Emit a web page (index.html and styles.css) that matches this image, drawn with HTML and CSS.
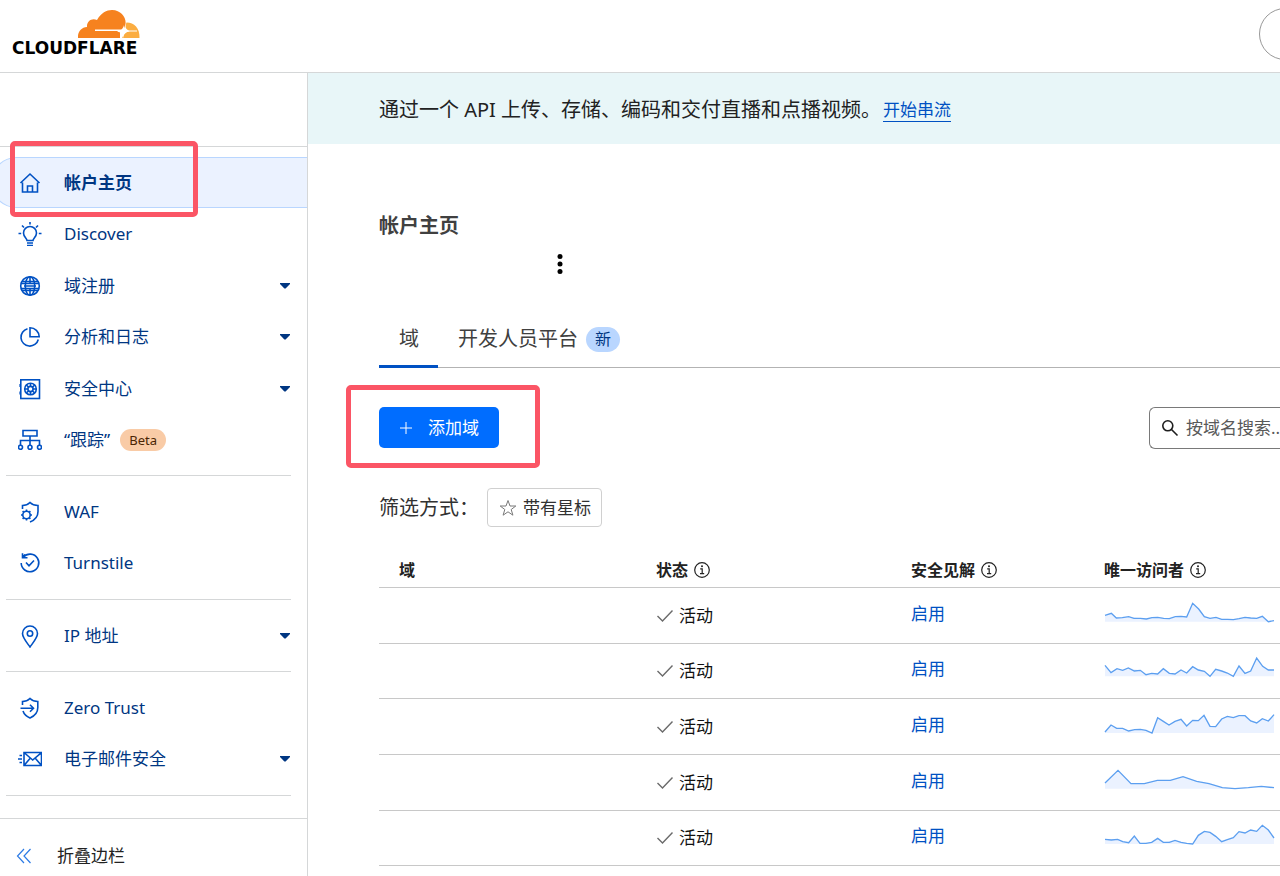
FILE: index.html
```html
<!DOCTYPE html>
<html lang="zh-CN">
<head>
<meta charset="utf-8">
<title>帐户主页 | Cloudflare</title>
<meta name="viewport" content="width=device-width, initial-scale=1">
<link rel="stylesheet" href="styles.css">
</head>
<body>
<svg class="defs" aria-hidden="true">
  <symbol id="caret" viewBox="0 0 10 6"><path d="M0 0h10v1L5.600 5.600h-1.200L0 1z" fill="currentColor"/></symbol>
  <symbol id="check" viewBox="0 0 18 14"><path d="M1.500 7l5 5L16.500 1.500" fill="none" stroke="currentColor" stroke-width="1.400"/></symbol>
  <symbol id="info" viewBox="0 0 16 16"><circle cx="8" cy="8" r="7.300" fill="none" stroke="currentColor" stroke-width="1.200"/><circle cx="8" cy="4.300" r="1" fill="currentColor"/><path d="M6.200 6.800h2v4.700M6 11.600h4.200" fill="none" stroke="currentColor" stroke-width="1.200"/></symbol>
</svg>
<div class="app">
  <header class="topbar">
    <a class="brand" href="#">
      <svg class="brand-cloud" viewBox="0 0 62 28" aria-hidden="true">
        <path d="M0 28C-.5 22 3 17.500 9 17C8.500 11 14 7.500 19 10C23 3 29 0 34 .1C43 0 48.500 8 47.500 14L46 19.500H17V21H42V28Z" fill="#f6821f"/>
        <path d="M48.500 12.600C56 12.500 62 18 61.500 28H44C46 23.500 48 22 51.500 21.500H59V20.500H51C47.500 19.500 46.800 17 48.500 12.600Z" fill="#fbad41"/>
        <path d="M46 15C46.500 19 47.500 20.500 52 21C47.500 22 46 23.500 45 28.500C44.500 24 43.500 22.500 39 21.500C43 20.500 45 19 46 15Z" fill="#fff"/>
      </svg>
      <span class="brand-name">CLOUDFLARE</span>
    </a>
    <button class="round-button" type="button" aria-label="菜单"></button>
  </header>

  <div class="shell">
    <aside class="sidebar">
      <div class="account-slot"></div>
      <nav>
        <ul class="nav-group first">
          <li><a class="nav-item active" href="#"><svg class="ico" viewBox="0 0 24 24"><path d="M2.500 12L12 3l9.500 9M4.500 11.500v9.500h15v-9.500M9.500 21v-6h5v6"/></svg><span>帐户主页</span><i class="mark mark-nav"></i></a></li>
          <li><a class="nav-item" href="#"><svg class="ico" viewBox="0 0 24 24"><path d="M9 18.500c0-2-3.500-3.500-3.500-7.500a6.500 6.500 0 0 1 13 0c0 4-3.500 5.500-3.500 7.500zM9 21h6M9 23.500h6M12 0v2.500M.5 11.500h2.700M20.800 11.500h2.700M4 3.500l2 2M20 3.500l-2 2"/></svg><span>Discover</span></a></li>
          <li><a class="nav-item" href="#"><svg class="ico" viewBox="0 0 24 24"><circle cx="12" cy="12" r="9.300"/><ellipse cx="12" cy="12" rx="4.700" ry="9.300"/><path d="M12 2.700v6M12 15v6.300M4 7.500h16M4 16.500h16M2.700 9.500h18.600M2.700 14.500h18.600M6 12h12" /></svg><span>域注册</span><svg class="caret"><use href="#caret"/></svg></a></li>
          <li><a class="nav-item" href="#"><svg class="ico" viewBox="0 0 24 24"><path d="M9.500 3.800A8.800 8.800 0 1 0 20.300 14.500M12 2.800V11.800h9.200A9.200 9.200 0 0 0 12 2.800z"/></svg><span>分析和日志</span><svg class="caret"><use href="#caret"/></svg></a></li>
          <li><a class="nav-item" href="#"><svg class="ico" viewBox="0 0 24 24"><rect x="2.800" y="2.800" width="18.700" height="18.700"/><circle cx="12.500" cy="12" r="5.800"/><circle cx="12.500" cy="12" r="2.600"/><path d="M12.500 6v3.400M12.500 14.600V18M6.700 12h3.200M15.100 12h3.200M8.400 8l2.200 2.200M14.400 13.800l2.200 2.200M16.600 8l-2.200 2.200M10.600 13.800L8.400 16M2.200 7v3M2.200 14.500v3"/></svg><span>安全中心</span><svg class="caret"><use href="#caret"/></svg></a></li>
          <li><a class="nav-item" href="#"><svg class="ico" viewBox="0 0 24 24"><path d="M5 2.500h14v5.500H5zM12 8v9M2.500 17v-4.500h19V17"/><circle cx="2.500" cy="19.300" r="2"/><circle cx="12" cy="19.300" r="2"/><circle cx="21.500" cy="19.300" r="2"/></svg><span>“跟踪”</span><span class="beta">Beta</span></a></li>
        </ul>
        <ul class="nav-group">
          <li><a class="nav-item" href="#"><svg class="ico" viewBox="0 0 24 24"><path d="M4.500 9V5.500C7.500 5.500 10 4.500 12 2.500c2 2 4.500 3 8 3v6c0 5-3 8.500-8 10.500"/><circle cx="8.500" cy="15" r="3.700"/><path d="M8.500 9.500v1.800M8.500 18.700v1.800M3 15h1.800M12.200 15H14M4.600 11.100l1.300 1.300M11.100 17.600l1.300 1.300M12.400 11.100l-1.300 1.300M5.900 17.600l-1.300 1.300"/></svg><span>WAF</span></a></li>
          <li><a class="nav-item" href="#"><svg class="ico" viewBox="0 0 24 24"><path d="M5.500 6A8.800 8.800 0 1 1 3.200 12M4.500 2.200v4.600h5M4.500 6.500L7 3.500M8 11.500l3 3.300 5-5.300"/></svg><span>Turnstile</span></a></li>
        </ul>
        <ul class="nav-group">
          <li><a class="nav-item" href="#"><svg class="ico" viewBox="0 0 24 24"><path d="M12 23C8 17.500 4.500 13.500 4.500 9.500a7.500 7.500 0 0 1 15 0c0 4-3.500 8-7.500 13.500z"/><circle cx="12" cy="9.500" r="2.700"/></svg><span>IP 地址</span><svg class="caret"><use href="#caret"/></svg></a></li>
        </ul>
        <ul class="nav-group">
          <li><a class="nav-item" href="#"><svg class="ico" viewBox="0 0 24 24"><path d="M4.500 9V5.500C7.500 5.500 10 4.500 12 2.500c2 2 4.500 3 7.800 3v6c0 5-3.300 8.500-7.800 10.500-3.500-1.500-6-4-7-7M2.500 12.200h13M12 8.700l3.500 3.500-3.500 3.500"/></svg><span>Zero Trust</span></a></li>
          <li><a class="nav-item" href="#"><svg class="ico" viewBox="0 0 24 24"><path d="M6 5.500h17.500v13H6zM6 5.500l8.700 7.500 8.800-7.500M6 18.500l6-7M23.500 18.500l-6-7M1.500 8.500H4M0 12h4M1.500 15.500H4"/></svg><span>电子邮件安全</span><svg class="caret"><use href="#caret"/></svg></a></li>
        </ul>
      </nav>
      <button class="collapse" type="button"><svg class="collapse-ico" viewBox="0 0 16 16" aria-hidden="true"><path d="M8 1L1.500 8 8 15M14.500 1L8 8l6.500 7"/></svg>折叠边栏</button>
    </aside>

    <main class="main">
      <div class="banner"><span>通过一个 API 上传、存储、编码和交付直播和点播视频。</span><a href="#">开始串流</a></div>
      <div class="content">
        <h1>帐户主页</h1>
        <button class="more" type="button" aria-label="更多"><svg viewBox="0 0 6 20"><circle cx="3" cy="2.500" r="2.500"/><circle cx="3" cy="10" r="2.500"/><circle cx="3" cy="17.500" r="2.500"/></svg></button>
        <div class="tabs">
          <button class="tab selected" type="button">域</button>
          <button class="tab" type="button">开发人员平台<span class="new">新</span></button>
        </div>
        <div class="toolbar">
          <div class="add-wrap">
            <button class="add" type="button"><svg viewBox="0 0 12 12" aria-hidden="true"><path d="M6 0v12M0 6h12"/></svg>添加域</button>
            <i class="mark mark-add"></i>
          </div>
          <label class="search"><svg viewBox="0 0 18 18" aria-hidden="true"><circle cx="6.800" cy="6.800" r="5"/><path d="M10.500 10.500l6 6"/></svg><input type="text" aria-label="按域名搜索" placeholder="按域名搜索..."></label>
        </div>
        <div class="filters"><span>筛选方式：</span><button class="star" type="button"><svg viewBox="0 0 18 18" aria-hidden="true"><path d="M9 1.500l2 5.500h5.800l-4.600 3.500 1.700 5.700L9 12.800l-4.900 3.400 1.700-5.700L1.200 7H7z"/></svg>带有星标</button></div>
        <table>
          <colgroup><col class="c-domain"><col class="c-status"><col class="c-insight"><col></colgroup>
          <thead><tr><th>域</th><th>状态<svg class="info"><use href="#info"/></svg></th><th>安全见解<svg class="info"><use href="#info"/></svg></th><th>唯一访问者<svg class="info"><use href="#info"/></svg></th></tr></thead>
          <tbody>
            <tr><td></td><td><span class="status"><svg class="check"><use href="#check"/></svg>活动</span></td><td><a href="#">启用</a></td><td><svg class="spark" viewBox="45 180 513 66"><path class="area" d="M48 223L67 217 82 231 119 227 172 234 206 229 241 233 276 226 293 228 311 187 329 204 346 227 363 232 381 229 398 235 433 236 468 229 503 232 520 226 538 242H48z"/><polyline points="48,223 67,217 82,231 100,230 119,227 135,232 154,232 172,234 189,230 206,229 224,232 241,233 259,227 276,226 293,228 311,187 329,204 346,227 363,232 381,229 398,235 416,235 433,236 450,233 468,229 485,231 503,232 520,226 538,242 555,239"/></svg></td></tr>
            <tr><td></td><td><span class="status"><svg class="check"><use href="#check"/></svg>活动</span></td><td><a href="#">启用</a></td><td><svg class="spark" viewBox="45 348 513 66"><path class="area" d="M48 376L66 398 84 386 101 391 118 384 154 391 171 404 206 402 223 386 241 400 258 402 276 390 293 399 311 380 346 394 363 409 380 388 415 399 433 409 450 378 468 400 485 393 503 354 521 379 538 390H555V409H48z"/><polyline points="48,376 66,398 84,386 101,391 118,384 136,393 154,391 171,404 188,400 206,402 223,386 241,400 258,402 276,390 293,399 311,380 328,390 346,394 363,409 380,388 398,393 415,399 433,409 450,378 468,400 485,393 503,354 521,379 538,390 555,390"/></svg></td></tr>
            <tr><td></td><td><span class="status"><svg class="check"><use href="#check"/></svg>活动</span></td><td><a href="#">启用</a></td><td><svg class="spark" viewBox="45 33 513 66"><path class="area" d="M48 93L66 72 83 82 101 82 119 90 154 85 189 96 206 50 240 72 276 55 293 75 311 58 328 59 345 43 363 76 380 77 398 54 415 46 433 50 468 44 485 60 503 66 520 53 538 60 555 41V96H48z"/><polyline points="48,93 66,72 83,82 101,82 119,90 137,86 154,85 171,88 189,96 206,50 223,61 240,72 258,61 276,55 293,75 311,58 328,59 345,43 363,76 380,77 398,54 415,46 433,50 450,44 468,44 485,60 503,66 520,53 538,60 555,41"/></svg></td></tr>
            <tr><td></td><td><span class="status"><svg class="check"><use href="#check"/></svg>活动</span></td><td><a href="#">启用</a></td><td><svg class="spark" viewBox="45 201 513 66"><path class="area" d="M48 246L87 208 126 248H166L205 238H244L282 227 323 241 360 248 400 260 438 263H48z"/><polyline points="48,246 87,208 126,248 166,248 205,238 244,238 282,227 323,241 360,248 400,260 438,263 478,260 517,256 555,260"/></svg></td></tr>
            <tr><td></td><td><span class="status"><svg class="check"><use href="#check"/></svg>活动</span></td><td><a href="#">启用</a></td><td><svg class="spark" viewBox="45 368 513 66"><path class="area" d="M48 417L86 417 119 427 136 407 153 429 188 426 206 414 223 426 258 420 311 431 328 405 346 393 363 396 398 424 433 412 450 394 468 398 485 389 503 393 520 375 538 389 555 413V431H48z"/><polyline points="48,417 67,419 86,417 101,424 119,427 136,407 153,429 171,429 188,426 206,414 223,426 241,426 258,420 276,426 293,429 311,431 328,405 346,393 363,396 380,408 398,424 415,418 433,412 450,394 468,398 485,389 503,393 520,375 538,389 555,413"/></svg></td></tr>
          </tbody>
        </table>
      </div>
    </main>
  </div>
</div>
</body>
</html>
```
FILE: styles.css
```css
*, *::before, *::after { box-sizing: border-box; }
body {
  margin: 0;
  overflow: hidden;
  background: #fff;
  color: #222;
  font: 17px/24px "Noto Sans", "Noto Sans CJK SC", sans-serif;
}
a { color: #0051c3; text-decoration: none; }
button { margin: 0; padding: 0; border: 0; background: none; color: inherit; font: inherit; }
svg { display: block; flex: none; }
.defs { position: absolute; width: 0; height: 0; }

.app { display: flex; flex-direction: column; height: 100vh; overflow: hidden; }
.topbar {
  display: flex;
  justify-content: space-between;
  align-items: flex-start;
  flex: none;
  height: 73px;
  padding: 8px 0 0 10px;
  border-bottom: 1px solid #d5d7d8;
}
.brand { display: flex; flex-direction: column; align-items: flex-end; padding: 2px 0 0 2px; color: #000; }
.brand-cloud { width: 62px; height: 28px; margin-right: -3px; }
.brand-name { font: bold 17px/20px "DejaVu Sans", sans-serif; }
.round-button { width: 52px; height: 52px; margin-right: -31px; border: 1px solid #999; border-radius: 50%; }

.shell { display: flex; flex: 1; min-height: 0; }
.sidebar { flex: none; width: 308px; border-right: 1px solid #d5d7d8; }
.account-slot { height: 74px; border-bottom: 1px solid #d5d7d8; }
.nav-group {
  margin: 0 16px 0 6px;
  padding: 10px 0;
  list-style: none;
  border-bottom: 1px solid #d5d7d8;
}
.nav-group.first { padding-bottom: 9px; }
.nav-item { display: flex; align-items: center; height: 51px; padding-left: 12px; color: #003682; }
.nav-group li:nth-child(even) .nav-item { height: 52px; }
.nav-item.active {
  position: relative;
  margin: 0 -16px 0 -15px;
  padding-left: 26px;
  border: 1px solid #b9d6ff;
  border-right: 0;
  border-radius: 26px 0 0 26px;
  background: #ebf2ff;
  font-weight: bold;
}
.ico { width: 24px; height: 24px; margin-right: 22px; fill: none; stroke: #0051c3; stroke-width: 1.6; }
.caret { width: 10px; height: 6px; margin: 0 1px 0 auto; }
.beta { margin-left: 10px; padding: 0 9px; border-radius: 11px; background: #f9cba6; color: #4a2504; font-size: 13px; line-height: 22px; }
.collapse {
  display: flex;
  align-items: center;
  width: 100%;
  height: 74px;
  margin-top: 22px;
  padding-left: 16px;
  border-top: 1px solid #d5d7d8;
}
.collapse-ico { width: 16px; height: 16px; margin-right: 25px; fill: none; stroke: #2c7be5; stroke-width: 1.2; }

.mark { position: absolute; border: 5px solid #fb5565; border-radius: 5px; pointer-events: none; }
.mark-nav { left: 18px; top: -17px; width: 188px; height: 76px; }
.mark-add { left: -33px; top: -22px; width: 194px; height: 83px; }

.main { flex: 1; min-width: 0; overflow: hidden; }
.banner { display: flex; align-items: center; gap: 2px; height: 71px; padding: 2px 0 0 71px; background: #e8f6f8; font-size: 20px; white-space: nowrap; }
.banner a { border-bottom: 1px solid #0051c3; font-size: 17px; line-height: 23px; }
.content { padding: 66px 0 0 71px; }
h1 { margin: 0; color: #404040; font-size: 20px; line-height: 32px; }
.more { display: block; margin: 12px 0 0 178px; }
.more svg { width: 6px; height: 20px; fill: #000; }
.tabs { display: flex; margin-top: 36px; border-bottom: 1px solid #b3b3b3; }
.tab { display: flex; align-items: center; gap: 8px; height: 58px; padding: 0 19px 0 20px; margin-bottom: -1px; color: #404040; font-size: 20px; }
.tab.selected { border-bottom: 3px solid #0051c3; padding-top: 3px; }
.new { padding: 0 9px; border-radius: 13px; background: #b9d6ff; color: #003682; font-size: 16px; line-height: 25px; }

.toolbar { display: flex; justify-content: space-between; margin-top: 39px; }
.add-wrap { position: relative; }
.add { display: flex; align-items: center; gap: 16px; height: 41px; padding: 0 20px 0 21px; border-radius: 5px; background: #006dff; color: #fff; }
.add svg { width: 12px; height: 12px; fill: none; stroke: #fff; stroke-width: 1; }
.search { display: flex; align-items: center; gap: 7px; width: 131px; height: 42px; padding-left: 11px; border: 1px solid #797979; border-right: 0; border-radius: 6px 0 0 6px; }
.search svg { width: 18px; height: 18px; fill: none; stroke: #1d1d1d; stroke-width: 1.6; }
.search input { flex: 1; min-width: 0; padding: 0; border: 0; outline: 0; background: none; font: inherit; }
.search input::placeholder { color: #595959; opacity: 1; }
.filters { display: flex; align-items: center; gap: 8px; margin-top: 39px; color: #313131; font-size: 20px; }
.star { display: flex; align-items: center; gap: 6px; height: 39px; padding: 0 10px 0 11px; border: 1px solid #d0d0d0; border-radius: 4px; font-size: 17px; }
.star svg { width: 18px; height: 18px; fill: none; stroke: #797979; stroke-width: 1; }

table { width: 100%; margin-top: 25px; border-collapse: separate; border-spacing: 0; table-layout: fixed; }
.c-domain { width: 257px; }
.c-status { width: 255px; }
.c-insight { width: 193px; }
th { height: 36px; padding: 0 0 0 20px; border-bottom: 1px solid #c8c8c8; font-size: 16px; line-height: 24px; text-align: left; white-space: nowrap; }
.info { display: inline-block; width: 16px; height: 16px; margin-left: 6px; vertical-align: -2px; }
td { height: 56px; padding: 0 0 0 20px; border-bottom: 1px solid #c8c8c8; }
tr:nth-child(3n+2) td { height: 55px; }
td a { display: block; padding-bottom: 4px; }
.status { display: flex; align-items: center; gap: 5px; color: #111; }
.check { width: 18px; height: 14px; color: #6a6a6a; }
.spark { width: 171px; height: 22px; margin-bottom: 8px; fill: none; stroke: #5c9ff0; stroke-width: 4; }
.spark .area { fill: #ebf2ff; stroke: none; }
```
